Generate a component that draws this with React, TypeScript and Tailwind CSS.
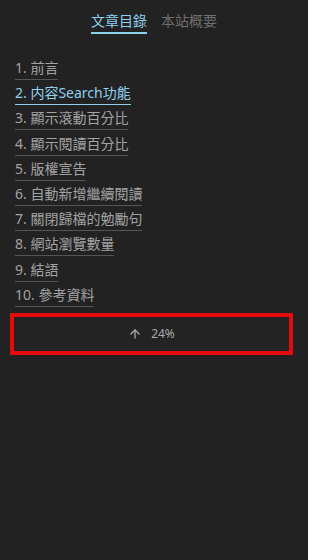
import { ArrowUp } from "lucide-react"

const items = [
  "1. 前言",
  "2. 内容Search功能",
  "3. 顯示滾動百分比",
  "4. 顯示閱讀百分比",
  "5. 版權宣告",
  "6. 自動新增繼續閱讀",
  "7. 關閉歸檔的勉勵句",
  "8. 網站瀏覽數量",
  "9. 結語",
  "10. 參考資料",
]

export default function App() {
  return (
    <div
      className="min-h-[560px] w-[308px] bg-[#222222] text-[14px]"
      style={{ fontFamily: '"Noto Sans", "Noto Sans CJK TC", sans-serif' }}
    >
      {/* Tabs */}
      <div className="flex justify-center gap-[14px] pt-[11px]">
        <span className="border-b-2 border-[#8fd0ef] pb-[1px] leading-[20px] text-[#8fd0ef]">
          文章目錄
        </span>
        <span className="leading-[20px] text-[#6f6f6f]">本站概要</span>
      </div>

      {/* TOC list */}
      <ol className="mt-[21px] pl-[15px] leading-[25.2px]">
        {items.map((item, i) => (
          <li key={item}>
            <a
              className={`border-b pb-[2px] ${
                i === 1
                  ? "border-[#8fd0ef] text-[#8fd0ef]"
                  : "border-[#555555] text-[#a3a3a3]"
              }`}
            >
              {item}
            </a>
          </li>
        ))}
      </ol>

      {/* Progress button */}
      <div className="ml-[10px] mt-[6px] flex h-[42px] w-[283px] items-center justify-center gap-[9px] border-4 border-[#e50b0b] bg-[#232323] text-[12px] text-[#a8a8a8]">
        <ArrowUp size={14} strokeWidth={2.25} />
        <span>24%</span>
      </div>
    </div>
  )
}
